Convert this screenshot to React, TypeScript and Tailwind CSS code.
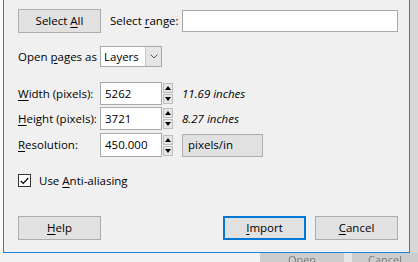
import React from "react";

const U = ({ children }: { children: React.ReactNode }) => <span className="underline underline-offset-2">{children}</span>;

function Spinner() {
  return (
    <div className="flex flex-col gap-[1px] ml-[1px] w-[10px]">
      <div className="h-[10px] bg-[#e6e6e6] border border-[#bdbdbd] flex items-center justify-center">
        <svg width="6" height="4" viewBox="0 0 6 4"><path d="M3 0 L6 4 L0 4 Z" fill="#000" /></svg>
      </div>
      <div className="h-[10px] bg-[#e6e6e6] border border-[#bdbdbd] flex items-center justify-center">
        <svg width="6" height="4" viewBox="0 0 6 4"><path d="M0 0 L6 0 L3 4 Z" fill="#000" /></svg>
      </div>
    </div>
  );
}

function Btn({ children, primary }: { children: React.ReactNode; primary?: boolean }) {
  return (
    <div
      className={
        "w-[83px] h-[24px] flex items-center justify-center bg-[#e1e1e1] " +
        (primary ? "border-2 border-[#0078d7]" : "border border-[#adadad]")
      }
    >
      <span className="whitespace-nowrap">{children}</span>
    </div>
  );
}

export default function App() {
  return (
    <div
      className="w-[418px] h-[262px] overflow-hidden bg-[#f4f4f4] flex flex-col text-[11.5px] text-black leading-none"
      style={{ fontFamily: '"Open Sans", "Noto Sans", sans-serif' }}
    >
      <div className="flex h-[253px] shrink-0">
        <div className="w-[3px] bg-[#fafafa]" />
        <div className="w-[407px] border-l border-r border-b border-[#1883d7] bg-[#f0f0f0] flex flex-col pl-[14px] pr-[11px]">
          {/* Row 1 */}
          <div className="flex items-center mt-[9px] h-[24px]">
            <Btn>
              Select <U>A</U>ll
            </Btn>
            <span className="ml-[9px] whitespace-nowrap">
              Select <U>r</U>ange:
            </span>
            <div className="ml-auto w-[216px] h-[22px] bg-white border border-[#a9a9a9]" />
          </div>
          {/* Row 2 */}
          <div className="flex items-center mt-[13px] h-[21px]">
            <span className="w-[82px] whitespace-nowrap">
              Open <U>p</U>ages as
            </span>
            <div className="w-[62px] h-[21px] bg-white border border-[#a9a9a9] flex items-stretch">
              <span className="flex-1 flex items-center pl-[3px]">Layers</span>
              <div className="w-[16px] bg-[#e5e5e5] border-l border-[#c8c8c8] flex items-center justify-center">
                <svg width="8" height="5" viewBox="0 0 8 5"><path d="M0.5 0.5 L4 4 L7.5 0.5" fill="none" stroke="#555" strokeWidth="1" /></svg>
              </div>
            </div>
          </div>
          {/* Width */}
          <div className="flex items-center mt-[15px] h-[23px]">
            <span className="w-[82px] whitespace-nowrap">
              <U>W</U>idth (pixels):
            </span>
            <div className="w-[62px] h-[23px] bg-white border border-[#a9a9a9] flex items-center pl-[4px]">5262</div>
            <Spinner />
            <span className="ml-[9px] italic whitespace-nowrap">11.69 inches</span>
          </div>
          {/* Height */}
          <div className="flex items-center mt-[2px] h-[23px]">
            <span className="w-[82px] whitespace-nowrap">
              <U>H</U>eight (pixels):
            </span>
            <div className="w-[62px] h-[23px] bg-white border border-[#a9a9a9] flex items-center pl-[4px]">3721</div>
            <Spinner />
            <span className="ml-[9px] italic whitespace-nowrap">8.27 inches</span>
          </div>
          {/* Resolution */}
          <div className="flex items-center mt-[3px] h-[24px]">
            <span className="w-[82px] whitespace-nowrap">
              <U>R</U>esolution:
            </span>
            <div className="w-[62px] h-[24px] bg-white border border-[#a9a9a9] flex items-center pl-[4px]">450.000</div>
            <Spinner />
            <div className="ml-[9px] w-[81px] h-[23px] bg-[#e1e1e1] border border-[#adadad] flex items-center pl-[5px]">pixels/in</div>
          </div>
          {/* Checkbox */}
          <div className="flex items-center mt-[17px] h-[13px]">
            <div className="w-[13px] h-[13px] bg-white border border-[#333] flex items-center justify-center">
              <svg width="9" height="8" viewBox="0 0 9 8"><path d="M0.8 4 L3.3 6.5 L8.2 1" fill="none" stroke="#000" strokeWidth="1.2" /></svg>
            </div>
            <span className="ml-[8px] whitespace-nowrap">
              Use <U>A</U>nti-aliasing
            </span>
          </div>
          {/* Buttons */}
          <div className="flex items-center mt-[29px] h-[24px]">
            <Btn>
              <U>H</U>elp
            </Btn>
            <div className="ml-auto flex gap-[9px]">
              <Btn primary>
                <U>I</U>mport
              </Btn>
              <Btn>
                <U>C</U>ancel
              </Btn>
            </div>
          </div>
        </div>
        <div className="flex-1 bg-[#d8d8d8]" />
      </div>
      <div className="flex-1 flex">
        <div className="w-[260px] bg-[#f2f2f2]" />
        <div className="w-[84px] bg-[#cdcdcd] flex items-start justify-center text-[#777] text-[11px] pt-[1px] blur-[0.6px]">Open</div>
        <div className="w-[8px] bg-[#e6e6e6]" />
        <div className="flex-1 bg-[#cdcdcd] flex items-start justify-center text-[#777] text-[11px] pt-[1px] blur-[0.6px]">Cancel</div>
      </div>
    </div>
  );
}
